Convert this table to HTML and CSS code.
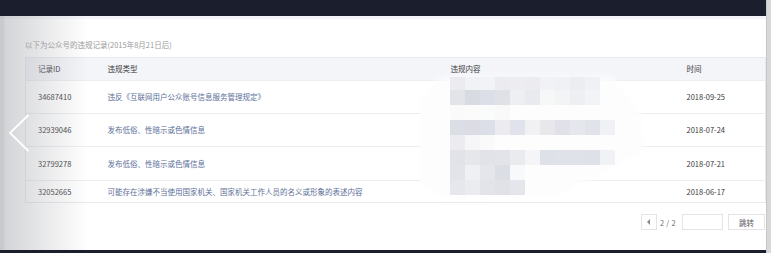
FILE: index.html
```html
<!DOCTYPE html>
<html lang="zh-CN">
<head>
<meta charset="utf-8">
<title>违规记录</title>
<link rel="stylesheet" href="styles.css">
</head>
<body>
<div class="page">
  <div class="app">
    <div class="topbar"></div>
    <div class="strip"></div>
    <main class="main">
      <p class="title">以下为公众号的违规记录(2015年8月21日后)</p>
      <div class="table-wrap">
        <table class="records">
          <colgroup><col class="c1"><col class="c2"><col class="c3"><col class="c4"></colgroup>
          <thead>
            <tr class="head"><th>记录ID</th><th>违规类型</th><th>违规内容</th><th>时间</th></tr>
          </thead>
          <tbody>
            <tr class="r1"><td>34687410</td><td class="type">违反《互联网用户公众账号信息服务管理规定》</td><td></td><td>2018-09-25</td></tr>
            <tr class="r2"><td>32939046</td><td class="type">发布低俗、性暗示或色情信息</td><td></td><td>2018-07-24</td></tr>
            <tr class="r3"><td>32799278</td><td class="type">发布低俗、性暗示或色情信息</td><td></td><td>2018-07-21</td></tr>
            <tr class="r4"><td>32052665</td><td class="type">可能存在涉嫌不当使用国家机关、国家机关工作人员的名义或形象的表述内容</td><td></td><td>2018-06-17</td></tr>
          </tbody>
        </table>
        <svg class="mosaic" width="300" height="150" viewBox="420 62 300 150">
          <defs><filter id="soft" x="-20%" y="-20%" width="140%" height="140%"><feGaussianBlur stdDeviation="3.5"/></filter></defs>
          <polygon filter="url(#soft)" fill="#fdfdfd" points="444,78 612,78 640,110 643,150 600,176 578,184 560,195 440,196 418,184 408,150 412,116 430,86"/>
          <g id="px"></g>
        </svg>
      </div>
      <div class="pager">
        <button class="prev" aria-label="上一页"><span class="tri"></span></button>
        <span class="count">2 / 2</span>
        <span class="jump-input"></span>
        <button class="jump">跳转</button>
      </div>
    </main>
    <div class="bottombar"></div>
  </div>
  <div class="scrollbar"></div>
</div>
<div class="shade"></div>
<svg class="chevron" width="40" height="60" viewBox="0 100 40 60"><polyline points="28.5,115 10,133 28.5,151" fill="none" stroke="#ffffff" stroke-width="1.8"/></svg>
<script src="app.js"></script>
</body>
</html>
```
FILE: app.js
```js
(function () {
  var rows = [
    ["#ebebf0","#f1f2f5","#f2f3f6","#ececf0","#ededf1","#ececf0","#f1f2f5","#f0f1f4","#ededf1","#f0f1f4"],
    ["#e3e4ea","#d9dbe3","#dcdfe7","#e0e1e7","#eeeff2","#e9eaee","#f6f8f8","#f3f4f6","#eeeff2","#f3f4f6"],
    ["#fafafb","#fbfbfc","#fafbfb","#f9f9fa"],
    ["#dcdee6","#dbdce4","#dcdfe7","#ececf0","#e0e3ec","#f1f1f4","#e8e8ec","#e0e1e9","#e5e7ed","#e0e3ea","#f0f1f4"],
    ["#ecebef","#f6f6f8","#fafafb"],
    ["#e2e3e8","#e6e7eb","#e2e3e8","#e3e4e9","#eaebef","#f5f5f7","#dfe1e9","#e0e2ea","#e1e2e9","#dfe1e9","#f1f2f6"],
    ["#e3e4e9","#eef0f4","#e5e6eb","#dcdee6","#f7f9fa"],
    ["#e6e7ec","#ebecef","#e3e4e9","#e0e2e8","#e5e6eb"]
  ];
  var g = document.getElementById("px");
  var ns = "http://www.w3.org/2000/svg";
  rows.forEach(function (row, j) {
    row.forEach(function (c, i) {
      var r = document.createElementNS(ns, "rect");
      var y = 75 + 15 * j;
      var h = 15;
      if (j === 0) { y = 77; h = 13; }
      r.setAttribute("x", 450 + 15 * i);
      r.setAttribute("y", y);
      r.setAttribute("width", 15);
      r.setAttribute("height", h);
      r.setAttribute("fill", c);
      g.appendChild(r);
    });
  });
})();
```
FILE: styles.css
```css
* { box-sizing: border-box; }
html, body { margin: 0; padding: 0; }
body {
  width: 771px;
  height: 253px;
  overflow: hidden;
  background: #fff;
  font-family: "Noto Sans CJK SC", "Noto Sans", sans-serif;
  font-size: 7.5px;
  color: #3a3a3a;
  position: relative;
}
.page { display: flex; height: 253px; }
.app { flex: 1; display: flex; flex-direction: column; min-width: 0; }
.topbar { height: 16px; background: #1b1f2d; }
.strip { height: 3px; background: #f3f5f8; }
.bottombar { height: 3px; background: #1b1f2d; }
.main { flex: 1; padding: 20px 1px 0 25px; }
.scrollbar {
  width: 5px;
  background: #d8d8d8;
  border-left: 1px solid #c6c6c6;
}
.title {
  margin: 0 0 6px;
  height: 12px;
  line-height: 12px;
  color: #9a9a9a;
}
.table-wrap { position: relative; }
.records {
  width: 740px;
  table-layout: fixed;
  border-collapse: collapse;
  border: 1px solid #e7e9ee;
}
.c1 { width: 70px; }
.c2 { width: 343px; }
.c3 { width: 236px; }
.c4 { width: 91px; }
.records th, .records td {
  padding: 0 0 0 12px;
  text-align: left;
  font-weight: normal;
  white-space: nowrap;
  overflow: hidden;
  line-height: 12px;
}
.head { height: 23px; background: #f4f5f9; }
.head th { color: #3a3a3a; }
.records tbody tr { border-top: 1px solid #ebedf0; }
.r1, .r2 { height: 33px; }
.r3 { height: 34px; }
.r4 { height: 22px; }
.records td { color: #3a3a3a; }
.records td.type { color: #5d6f99; }
.mosaic {
  position: absolute;
  left: 395px;
  top: 5px;
}
.pager {
  display: flex;
  justify-content: flex-end;
  align-items: center;
  margin-top: 11px;
  height: 16px;
}
.prev {
  width: 16px;
  height: 16px;
  padding: 0;
  border: 1px solid #e4e4e6;
  background: #fff;
  display: flex;
  align-items: center;
  justify-content: center;
}
.tri {
  width: 0;
  height: 0;
  border-top: 3px solid transparent;
  border-bottom: 3px solid transparent;
  border-right: 3px solid #8a8a8a;
}
.count { margin: 0 6px 0 3px; color: #707070; letter-spacing: 0.3px; }
.jump-input {
  width: 41px;
  height: 16px;
  border: 1px solid #e4e4e6;
  background: #fff;
}
.jump {
  width: 37px;
  height: 16px;
  margin-left: 5px;
  padding: 0;
  border: 1px solid #e4e4e6;
  background: #fff;
  font-family: inherit;
  font-size: 7.5px;
  color: #5a5a5a;
}
.shade {
  position: absolute;
  left: 0;
  top: 16px;
  bottom: 3px;
  width: 90px;
  background: linear-gradient(to right,
    rgba(165,167,173,0.62) 0,
    rgba(165,167,173,0.58) 4px,
    rgba(165,167,173,0.48) 5px,
    rgba(165,167,173,0.28) 40px,
    rgba(165,167,173,0) 88px);
  pointer-events: none;
}
.chevron {
  position: absolute;
  left: 0;
  top: 100px;
}
```
